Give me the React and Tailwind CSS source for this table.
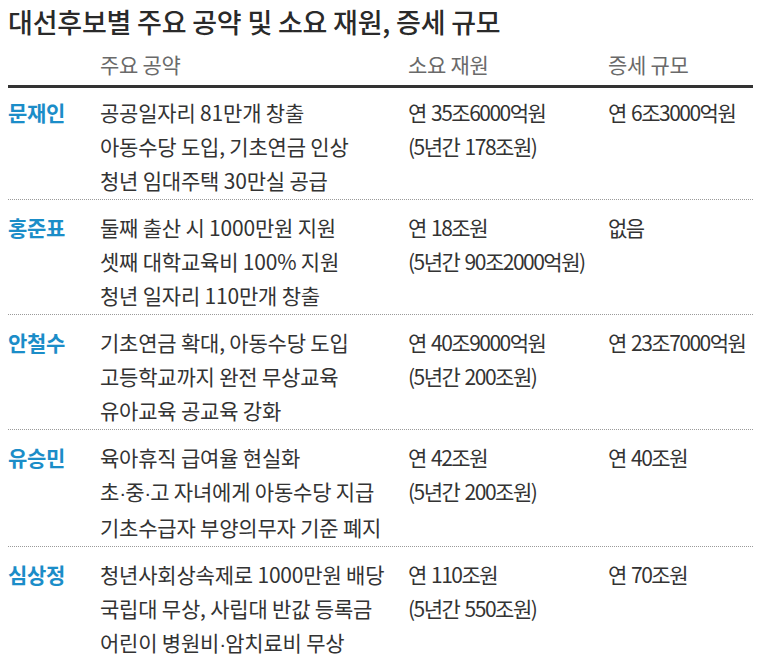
import React from "react";

const rows = [
  {
    name: "문재인",
    pledges: ["공공일자리 81만개 창출", "아동수당 도입, 기초연금 인상", "청년 임대주택 30만실 공급"],
    fund: ["연 35조6000억원", "(5년간 178조원)"],
    tax: "연 6조3000억원",
  },
  {
    name: "홍준표",
    pledges: ["둘째 출산 시 1000만원 지원", "셋째 대학교육비 100% 지원", "청년 일자리 110만개 창출"],
    fund: ["연 18조원", "(5년간 90조2000억원)"],
    tax: "없음",
  },
  {
    name: "안철수",
    pledges: ["기초연금 확대, 아동수당 도입", "고등학교까지 완전 무상교육", "유아교육 공교육 강화"],
    fund: ["연 40조9000억원", "(5년간 200조원)"],
    tax: "연 23조7000억원",
  },
  {
    name: "유승민",
    pledges: ["육아휴직 급여율 현실화", "초·중·고 자녀에게 아동수당 지급", "기초수급자 부양의무자 기준 폐지"],
    fund: ["연 42조원", "(5년간 200조원)"],
    tax: "연 40조원",
  },
  {
    name: "심상정",
    pledges: ["청년사회상속제로 1000만원 배당", "국립대 무상, 사립대 반값 등록금", "어린이 병원비·암치료비 무상"],
    fund: ["연 110조원", "(5년간 550조원)"],
    tax: "연 70조원",
  },
];

function WithDots({ text }) {
  const parts = text.split("·");
  return (
    <>
      {parts.map((p, i) => (
        <React.Fragment key={i}>
          {i > 0 && (
            <span className="font-['Liberation_Sans',sans-serif] tracking-[-1px]">·</span>
          )}
          {p}
        </React.Fragment>
      ))}
    </>
  );
}

export default function App() {
  return (
    <div
      className="w-[763px] h-[659px] bg-white text-[#333] overflow-hidden"
      style={{ fontFamily: '"Noto Sans CJK KR", "Noto Sans", sans-serif' }}
    >
      <h1 className="pl-[8px] pt-[5px] text-[27px] leading-[34px] font-medium text-[#2a2a2a] tracking-[-0.2px]">
        대선후보별 주요 공약 및 소요 재원, 증세 규모
      </h1>
      <div className="ml-[8px] mr-[10px]">
        <div className="mt-[11px] grid grid-cols-[92px_308px_200px_1fr] pb-[7px] border-b-[3px] border-[#333] text-[21px] leading-[28px] text-[#6a6a6a] tracking-[-0.3px]">
          <div></div>
          <div>주요 공약</div>
          <div>소요 재원</div>
          <div>증세 규모</div>
        </div>
        {rows.map((r, i) => (
          <div
            key={r.name}
            className={
              "grid grid-cols-[92px_308px_200px_1fr] pb-[2px] text-[21px] leading-[34px] " +
              (i === 0 ? "pt-[7px] " : "pt-[10px] ") +
              (i < rows.length - 1 ? "border-b border-dotted border-[#9a9a9a]" : "")
            }
          >
            <div className="font-bold text-[#1b8dc8] tracking-[-0.3px]">{r.name}</div>
            <div className="flex flex-col tracking-[-0.2px]">
              {r.pledges.map((p) => (
                <div key={p} className="whitespace-nowrap">
                  <WithDots text={p} />
                </div>
              ))}
            </div>
            <div className="flex flex-col tracking-[-1.5px] [word-spacing:2px]">
              {r.fund.map((f) => (
                <div key={f} className="whitespace-nowrap">{f}</div>
              ))}
            </div>
            <div className="tracking-[-1.5px] [word-spacing:2px] whitespace-nowrap">{r.tax}</div>
          </div>
        ))}
      </div>
    </div>
  );
}
